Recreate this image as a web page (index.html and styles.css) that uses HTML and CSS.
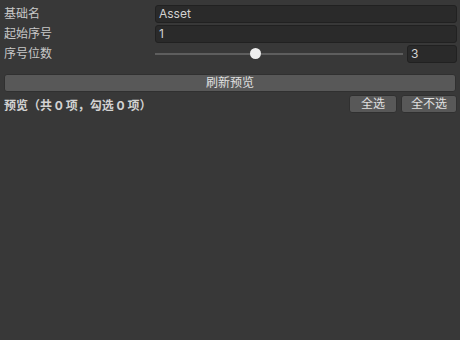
FILE: index.html
```html
<!DOCTYPE html>
<html lang="zh">
<head>
<meta charset="utf-8">
<link rel="stylesheet" href="styles.css">
</head>
<body>
<div class="window">
  <div class="row">
    <div class="label">基础名</div>
    <div class="field">Asset</div>
  </div>
  <div class="row">
    <div class="label">起始序号</div>
    <div class="field">1</div>
  </div>
  <div class="row">
    <div class="label">序号位数</div>
    <div class="slider">
      <div class="track"><div class="thumb"></div></div>
    </div>
    <div class="field num">3</div>
  </div>
  <div class="button refresh">刷新预览</div>
  <div class="preview-row">
    <div class="bold">预览（共 0 项，勾选 0 项）</div>
    <div class="buttons">
      <div class="button small">全选</div>
      <div class="button small wide">全不选</div>
    </div>
  </div>
</div>
</body>
</html>
```

FILE: styles.css
```css
html, body {
  margin: 0;
  padding: 0;
  background: #383838;
  width: 460px;
  height: 340px;
  overflow: hidden;
}
body {
  font-family: "Inter", "Noto Sans CJK SC", sans-serif;
  font-size: 12px;
  color: #c8c8c8;
}
.window {
  padding: 5px 3px 0 4px;
  display: flex;
  flex-direction: column;
}
.row {
  display: flex;
  align-items: center;
  height: 18px;
  margin-bottom: 2px;
}
.label {
  width: 151px;
  flex: none;
  line-height: 18px;
}
.field {
  flex: 1;
  height: 18px;
  box-sizing: border-box;
  background: #2a2a2a;
  border: 1px solid #212121;
  border-radius: 3px;
  padding: 0 3px;
  line-height: 16px;
  color: #d2d2d2;
}
.field.num {
  flex: none;
  width: 50px;
  margin-left: 4px;
}
.slider {
  flex: 1;
  height: 18px;
  display: flex;
  align-items: center;
}
.track {
  position: relative;
  width: 100%;
  height: 2px;
  background: #5e5e5e;
}
.thumb {
  position: absolute;
  left: 95px;
  top: -5px;
  width: 11px;
  height: 11px;
  border-radius: 50%;
  background: #eeeeee;
}
.button {
  box-sizing: border-box;
  background: #585858;
  border: 1px solid #303030;
  border-radius: 3px;
  text-align: center;
  color: #e0e0e0;
  height: 18px;
  line-height: 16px;
}
.refresh {
  margin-top: 9px;
  margin-right: 1px;
}
.preview-row {
  display: flex;
  align-items: center;
  justify-content: space-between;
  margin-top: 3px;
}
.bold {
  font-weight: bold;
  color: #d2d2d2;
}
.buttons {
  display: flex;
  gap: 4px;
}
.small {
  width: 48px;
}
.small.wide {
  width: 56px;
}
```
